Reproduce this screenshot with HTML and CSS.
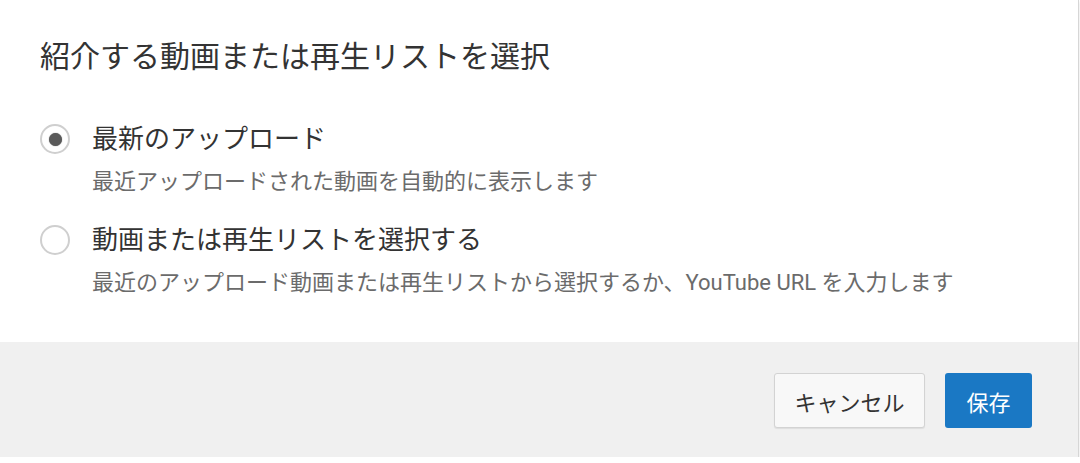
FILE: index.html
```html
<!DOCTYPE html>
<html lang="ja">
  <head>
    <meta charset="UTF-8" />
    <title>紹介する動画または再生リストを選択</title>
    <link rel="stylesheet" href="styles.css">
  </head>
  <body>
    <div class="dialog">
      <div class="dialog-body">
        <h1 class="title">紹介する動画または再生リストを選択</h1>

        <div class="options">
          <label class="option">
            <span class="radio checked"></span>
            <span class="option-text">
              <span class="option-label">最新のアップロード</span>
              <span class="option-desc">最近アップロードされた動画を自動的に表示します</span>
            </span>
          </label>

          <label class="option">
            <span class="radio"></span>
            <span class="option-text">
              <span class="option-label">動画または再生リストを選択する</span>
              <span class="option-desc">最近のアップロード動画または再生リストから選択するか、YouTube URL を入力します</span>
            </span>
          </label>
        </div>
      </div>

      <div class="dialog-footer">
        <button class="btn btn-cancel">キャンセル</button>
        <button class="btn btn-save">保存</button>
      </div>
    </div>
  </body>
</html>
```

FILE: styles.css
```css
body {
  margin: 0;
  background: #fff;
  font-family: Roboto, "Noto Sans CJK JP", sans-serif;
}
.dialog {
  width: 1078px;
  border-right: 1px solid #d6d6d6;
  background: #fff;
  box-shadow: 0 2px 3px rgba(0, 0, 0, 0.12);
}
.dialog-body {
  padding: 37px 40px 44px;
}
.title {
  margin: 0;
  font-size: 30px;
  line-height: 40px;
  font-weight: 400;
  color: #333;
}
.options {
  margin-top: 44px;
  display: flex;
  flex-direction: column;
  gap: 25px;
}
.option {
  display: flex;
  gap: 22px;
}
.radio {
  flex: none;
  width: 26px;
  height: 26px;
  margin-top: 3px;
  border: 2px solid #cfcfcf;
  border-radius: 50%;
  display: flex;
  align-items: center;
  justify-content: center;
}
.radio.checked::after {
  content: "";
  width: 13px;
  height: 13px;
  border-radius: 50%;
  background: #5a5a5a;
  box-shadow: 0 0 1px #5a5a5a;
}
.option-text {
  display: flex;
  flex-direction: column;
  gap: 10px;
}
.option-label {
  font-size: 26px;
  line-height: 36px;
  color: #333;
}
.option-desc {
  font-size: 22px;
  line-height: 30px;
  color: #6b6b6b;
}
.dialog-footer {
  background: #f0f0f0;
  display: flex;
  justify-content: flex-end;
  gap: 20px;
  padding: 31px 46px 29px;
}
.btn {
  font-family: inherit;
  font-size: 22px;
  height: 55px;
  border-radius: 3px;
  cursor: pointer;
}
.btn-cancel {
  width: 151px;
  background: #f8f8f8;
  color: #333;
  border: 1px solid #d3d3d3;
  box-shadow: 0 1px 1px rgba(0, 0, 0, 0.08);
}
.btn-save {
  width: 87px;
  background: #1a78c4;
  color: #fff;
  border: none;
}
```
